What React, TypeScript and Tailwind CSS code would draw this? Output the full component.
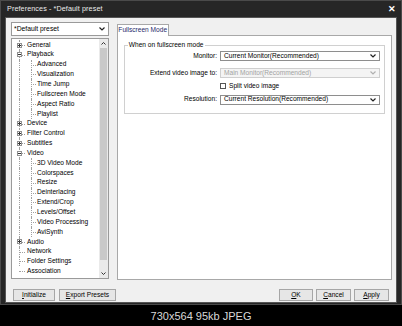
import React from "react";

type Item = { label: string; level: 0 | 1; exp?: "+" | "-" | null };

const items: Item[] = [
  { label: "General", level: 0, exp: "+" },
  { label: "Playback", level: 0, exp: "-" },
  { label: "Advanced", level: 1 },
  { label: "Visualization", level: 1 },
  { label: "Time Jump", level: 1 },
  { label: "Fullscreen Mode", level: 1 },
  { label: "Aspect Ratio", level: 1 },
  { label: "Playlist", level: 1 },
  { label: "Device", level: 0, exp: "+" },
  { label: "Filter Control", level: 0, exp: "+" },
  { label: "Subtitles", level: 0, exp: "+" },
  { label: "Video", level: 0, exp: "-" },
  { label: "3D Video Mode", level: 1 },
  { label: "Colorspaces", level: 1 },
  { label: "Resize", level: 1 },
  { label: "Deinterlacing", level: 1 },
  { label: "Extend/Crop", level: 1 },
  { label: "Levels/Offset", level: 1 },
  { label: "Video Processing", level: 1 },
  { label: "AviSynth", level: 1 },
  { label: "Audio", level: 0, exp: "+" },
  { label: "Network", level: 0, exp: null },
  { label: "Folder Settings", level: 0, exp: null },
  { label: "Association", level: 0, exp: null },
];

function Chevron({ color = "#222" }: { color?: string }) {
  return (
    <svg width="6" height="4" viewBox="0 0 6 4">
      <path d="M0.5 0.5 L3 3 L5.5 0.5" fill="none" stroke={color} strokeWidth="1.2" />
    </svg>
  );
}

function TreeRow({ it, last }: { it: Item; last: boolean }) {
  return (
    <div className="relative flex h-[9.85px] items-center">
      {!last && (
        <span className="absolute left-[6px] top-0 h-full border-l border-dotted border-[#a0a0a0]" />
      )}
      {it.level === 0 ? (
        <>
          <span className="absolute left-[6px] top-1/2 w-[6px] border-t border-dotted border-[#a0a0a0]" />
          {it.exp && (
            <span className="absolute left-[4px] top-[2.5px] flex h-[5px] w-[5px] items-center justify-center border border-[#919191] bg-white">
              <span className="absolute h-px w-[3px] bg-[#333]" />
              {it.exp === "+" && <span className="absolute h-[3px] w-px bg-[#333]" />}
            </span>
          )}
          <span className="ml-[14px] whitespace-nowrap">{it.label}</span>
        </>
      ) : (
        <>
          <span className="absolute left-[18px] top-0 h-full border-l border-dotted border-[#a0a0a0]" />
          <span className="absolute left-[18px] top-1/2 w-[5px] border-t border-dotted border-[#a0a0a0]" />
          <span className="ml-[24px] whitespace-nowrap">{it.label}</span>
        </>
      )}
    </div>
  );
}

function Select({ value, disabled }: { value: string; disabled?: boolean }) {
  return (
    <div
      className={
        "flex h-[10px] w-[160px] items-center justify-between border pl-[3px] pr-[3px] " +
        (disabled
          ? "border-[#cfcfcf] bg-[#f4f4f4] text-[#a3a3a3]"
          : "border-[#8e8e8e] bg-white text-black")
      }
    >
      <span className="whitespace-nowrap">{value}</span>
      <Chevron color={disabled ? "#b0b0b0" : "#222"} />
    </div>
  );
}

function Btn({ w, children }: { w: string; children: React.ReactNode }) {
  return (
    <div
      className={
        "flex h-[12px] items-center justify-center border border-[#a6a6a6] bg-[#e6e6e6] text-black " + w
      }
    >
      {children}
    </div>
  );
}

export default function App() {
  return (
    <div className="flex h-[326px] w-[402px] flex-col bg-black font-['Liberation_Sans',Arial,sans-serif] text-[6.6px] leading-none text-black">
      <div className="flex h-[305px] flex-col border border-[#4a4a4a] bg-[#262626]">
        <div className="flex h-[16px] items-center justify-between pl-[6px] pr-[5px] text-[7.2px] text-[#ececec]">
          <span className="tracking-[0.1px]">Preferences - *Default preset</span>
          <span className="text-[9px] font-bold text-white">✕</span>
        </div>
        <div className="mx-[4px] flex h-[286px] flex-col border border-[#555] bg-[#f0f0f0] pl-[5px] pr-[4px] pt-[4px]">
          <div className="flex gap-[8px]">
            <div className="flex w-[98px] flex-col gap-[2px]">
              <div className="flex h-[14px] items-center justify-between border border-[#9a9a9a] bg-white pl-[2px] pr-[3px] text-[6.8px]">
                <span>*Default preset</span>
                <Chevron />
              </div>
              <div className="flex h-[241px] border border-[#9a9a9a] bg-white">
                <div className="relative flex-1 overflow-hidden pl-[1px] pt-[1px]">
                  {items.map((it, i) => (
                    <TreeRow key={it.label} it={it} last={i === items.length - 1} />
                  ))}
                </div>
                <div className="flex w-[9px] flex-col bg-[#eaeaea]">
                  <div className="flex h-[9px] items-center justify-center">
                    <svg width="5" height="3" viewBox="0 0 5 3">
                      <path d="M0.5 2.5 L2.5 0.5 L4.5 2.5" fill="none" stroke="#333" strokeWidth="1" />
                    </svg>
                  </div>
                  <div className="mx-[1px] h-[212px] bg-[#c9c9c9]" />
                  <div className="flex-1" />
                  <div className="flex h-[9px] items-center justify-center">
                    <svg width="5" height="3" viewBox="0 0 5 3">
                      <path d="M0.5 0.5 L2.5 2.5 L4.5 0.5" fill="none" stroke="#333" strokeWidth="1" />
                    </svg>
                  </div>
                </div>
              </div>
            </div>
            <div className="flex w-[276px] flex-col">
              <div className="flex h-[13px] items-end">
                <div className="z-10 -mb-px flex h-[12px] w-[52px] items-center justify-center border border-b-0 border-[#a8a8a8] bg-white text-[#1f2a6b]">
                  Fullscreen Mode
                </div>
              </div>
              <div className="h-[245px] border border-[#a8a8a8] bg-white px-[6px] pt-[9px]">
                <div className="relative h-[69px] border border-[#d0d0d0]">
                  <span className="absolute -top-[4px] left-[3px] bg-white px-[1px]">When on fullscreen mode</span>
                  <div className="flex flex-col gap-[7px] pr-[4px] pt-[5px]">
                    <div className="flex items-center justify-end gap-[3px]">
                      <span>Monitor:</span>
                      <Select value="Current Monitor(Recommended)" />
                    </div>
                    <div className="flex items-center justify-end gap-[3px]">
                      <span>Extend video image to:</span>
                      <Select value="Main Monitor(Recommended)" disabled />
                    </div>
                    <div className="-my-[2px] flex items-center justify-end">
                      <div className="flex w-[160px] items-center gap-[3px]">
                        <span className="h-[6px] w-[6px] border border-[#555] bg-white" />
                        <span>Split video image</span>
                      </div>
                    </div>
                    <div className="flex items-center justify-end gap-[3px]">
                      <span>Resolution:</span>
                      <Select value="Current Resolution(Recommended)" />
                    </div>
                  </div>
                </div>
              </div>
            </div>
          </div>
          <div className="mt-[9px] flex justify-between pl-[2px] pr-[3px]">
            <div className="flex gap-[4px]">
              <Btn w="w-[42px]">
                <span><span className="underline">I</span>nitialize</span>
              </Btn>
              <Btn w="w-[57px]">
                <span><span className="underline">E</span>xport Presets</span>
              </Btn>
            </div>
            <div className="flex gap-[3px]">
              <Btn w="w-[34px]">
                <span><span className="underline">O</span>K</span>
              </Btn>
              <Btn w="w-[35px]">
                <span><span className="underline">C</span>ancel</span>
              </Btn>
              <Btn w="w-[35px]">
                <span><span className="underline">A</span>pply</span>
              </Btn>
            </div>
          </div>
        </div>
      </div>
      <div className="flex flex-1 items-center justify-center pt-[1px] text-[11px] text-[#d8d8d8]">
        730x564 95kb JPEG
      </div>
    </div>
  );
}
